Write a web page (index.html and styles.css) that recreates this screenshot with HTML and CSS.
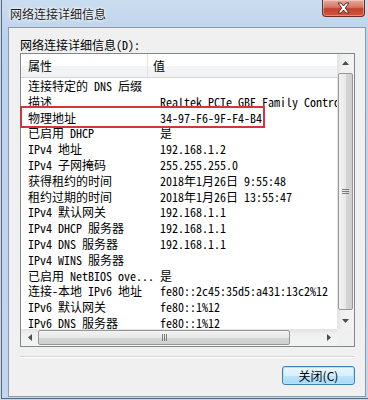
FILE: index.html
```html
<!DOCTYPE html>
<html>
<head>
<meta charset="utf-8">
<link rel="stylesheet" href="styles.css">
</head>
<body>
<div class="win">
  <div class="titlebar">
    <span class="title">网络连接详细信息</span>
    <div class="close">
      <svg width="17" height="12" viewBox="0 0 17 12">
        <path d="M3 1 L6 1 L8.5 4 L11 1 L14 1 L10.3 6 L14 11 L11 11 L8.5 8 L6 11 L3 11 L6.7 6 Z" fill="#fff" stroke="#5a2a22" stroke-width="1" stroke-linejoin="round"/>
      </svg>
    </div>
  </div>
  <div class="client">
    <div class="label">网络连接详细信息(D):</div>
    <div class="lv">
      <div class="lv-main">
        <div class="lv-head">
          <div class="c1">属性</div>
          <div class="hsep"></div>
          <div class="c2">值</div>
        </div>
        <div class="lv-body">
          <div class="row"><span class="c1">连接特定的 DNS 后缀</span><span class="c2"></span></div>
          <div class="row"><span class="c1">描述</span><span class="c2">Realtek PCIe GBE Family Controller</span></div>
          <div class="row"><span class="c1">物理地址</span><span class="c2">34-97-F6-9F-F4-B4</span></div>
          <div class="row"><span class="c1">已启用 DHCP</span><span class="c2">是</span></div>
          <div class="row"><span class="c1">IPv4 地址</span><span class="c2">192.168.1.2</span></div>
          <div class="row"><span class="c1">IPv4 子网掩码</span><span class="c2">255.255.255.0</span></div>
          <div class="row"><span class="c1">获得租约的时间</span><span class="c2">2018年1月26日 9:55:48</span></div>
          <div class="row"><span class="c1">租约过期的时间</span><span class="c2">2018年1月26日 13:55:47</span></div>
          <div class="row"><span class="c1">IPv4 默认网关</span><span class="c2">192.168.1.1</span></div>
          <div class="row"><span class="c1">IPv4 DHCP 服务器</span><span class="c2">192.168.1.1</span></div>
          <div class="row"><span class="c1">IPv4 DNS 服务器</span><span class="c2">192.168.1.1</span></div>
          <div class="row"><span class="c1">IPv4 WINS 服务器</span><span class="c2"></span></div>
          <div class="row"><span class="c1">已启用 NetBIOS ove...</span><span class="c2">是</span></div>
          <div class="row"><span class="c1">连接-本地 IPv6 地址</span><span class="c2">fe80::2c45:35d5:a431:13c2%12</span></div>
          <div class="row"><span class="c1">IPv6 默认网关</span><span class="c2">fe80::1%12</span></div>
          <div class="row"><span class="c1">IPv6 DNS 服务器</span><span class="c2">fe80::1%12</span></div>
        </div>
      </div>
      <div class="vscroll">
        <div class="arrow"><svg width="7" height="4" viewBox="0 0 7 4"><path d="M0 4 L3.5 0 L7 4 Z" fill="#4d4d4d"/></svg></div>
        <div class="vthumb"><div class="grip-h"></div></div>
        <div class="arrow"><svg width="7" height="4" viewBox="0 0 7 4"><path d="M0 0 L3.5 4 L7 0 Z" fill="#4d4d4d"/></svg></div>
      </div>
      <div class="hscroll">
        <div class="arrow"><svg width="4" height="7" viewBox="0 0 4 7"><path d="M4 0 L0 3.5 L4 7 Z" fill="#4d4d4d"/></svg></div>
        <div class="hthumb"><div class="grip-v"></div></div>
        <div class="arrow"><svg width="4" height="7" viewBox="0 0 4 7"><path d="M0 0 L4 3.5 L0 7 Z" fill="#4d4d4d"/></svg></div>
      </div>
      <div class="corner"></div>
    </div>
    <div class="sep"></div>
    <div class="btnrow"><div class="btn">关闭(C)</div></div>
  </div>
</div>
<div class="highlight"></div>
</body>
</html>
```
FILE: styles.css
```css
html, body {
  margin: 0;
  padding: 0;
}
body {
  width: 368px;
  height: 400px;
  overflow: hidden;
  position: relative;
  background: #c3d7ec;
}
.win {
  margin-left: 1px;
  width: 367px;
  height: 399px;
  box-sizing: border-box;
  border-left: 1px solid #5b6b7d;
  border-bottom: 1px solid #5b6b7d;
  background: linear-gradient(#cadcef, #bcd2ea 40px, #c2d6ec);
}
.titlebar {
  height: 27px;
  display: flex;
  align-items: flex-start;
  justify-content: space-between;
}
.title {
  font-family: "Noto Sans CJK SC", sans-serif;
  font-size: 12px;
  line-height: 14px;
  padding: 7px 0 0 8px;
  color: #1e1e1e;
  text-shadow: 0 0 4px #fff, 0 0 3px #fff;
}
.close {
  width: 43px;
  height: 17px;
  margin-right: 3px;
  box-sizing: border-box;
  border: 1px solid #6e2b22;
  border-top: none;
  border-radius: 0 0 4px 4px;
  background: linear-gradient(#e9a89a, #d47766 45%, #c2412c 55%, #d5553c);
  display: flex;
  align-items: center;
  justify-content: center;
  box-shadow: inset 0 0 0 1px rgba(255,255,255,0.35);
}
.client {
  margin-left: 6px;
  width: 358px;
  height: 370px;
  box-sizing: border-box;
  border: 1px solid #8c9aab;
  background: #f0f0f0;
  font-family: "Noto Sans Mono CJK SC", "Noto Sans CJK SC", monospace;
  font-size: 12px;
  color: #000;
}
.label {
  padding: 10px 0 0 11px;
  line-height: 14px;
  height: 14px;
}
.lv {
  margin: 1px 0 0 11px;
  width: 335px;
  height: 294px;
  box-sizing: border-box;
  border: 1px solid #828790;
  background: #fff;
  display: grid;
  grid-template-columns: 316px 17px;
  grid-template-rows: 275px 17px;
}
.lv-main {
  overflow: hidden;
}
.lv-head {
  height: 23px;
  border-bottom: 1px solid #d5d5d5;
  background: linear-gradient(#ffffff, #ffffff 50%, #f3f4f6 52%, #f1f2f4);
  display: flex;
  align-items: center;
  font-family: "Noto Sans CJK SC", sans-serif;
  font-size: 12px;
}
.lv-head .c1 {
  width: 126px;
  padding-left: 7px;
  box-sizing: border-box;
}
.hsep {
  width: 1px;
  height: 23px;
  background: #e3e5e9;
}
.lv-head .c2 {
  padding-left: 5px;
}
.row {
  height: 15.8px;
  line-height: 15.8px;
  display: flex;
  white-space: nowrap;
}
.row .c1 {
  width: 139px;
  padding-left: 7px;
  box-sizing: border-box;
  flex: none;
  overflow: hidden;
}
.row .c2 {
  flex: none;
}
.vscroll {
  background: linear-gradient(90deg, #e3e3e3, #f0f0f0 30%, #f3f3f3);
  display: flex;
  flex-direction: column;
  align-items: center;
}
.vscroll .arrow {
  height: 17px;
  width: 17px;
  display: flex;
  align-items: center;
  justify-content: center;
}
.vthumb {
  flex: 1;
  width: 15px;
  margin: 2px 0;
  box-sizing: border-box;
  border: 1px solid #979797;
  border-radius: 2px;
  background: linear-gradient(90deg, #f3f3f3, #e8e8e8 50%, #d6d6d6 51%, #d0d0d0);
  display: flex;
  align-items: center;
  justify-content: center;
}
.grip-h {
  width: 7px;
  height: 5px;
  background: repeating-linear-gradient(#7a7a7a 0 1px, transparent 1px 2px);
}
.hscroll {
  background: linear-gradient(#e3e3e3, #f0f0f0 30%, #f3f3f3);
  display: flex;
  align-items: center;
}
.hscroll .arrow {
  width: 17px;
  height: 17px;
  flex: none;
  display: flex;
  align-items: center;
  justify-content: center;
}
.hthumb {
  width: 252px;
  height: 15px;
  margin-right: 30px;
  box-sizing: border-box;
  border: 1px solid #979797;
  border-radius: 2px;
  background: linear-gradient(#f3f3f3, #e8e8e8 50%, #d6d6d6 51%, #d0d0d0);
  display: flex;
  align-items: center;
  justify-content: center;
}
.grip-v {
  width: 5px;
  height: 7px;
  background: repeating-linear-gradient(90deg, #7a7a7a 0 1px, transparent 1px 2px);
}
.corner {
  background: #f0f0f0;
}
.sep {
  margin: 9px 0 0 11px;
  width: 334px;
  height: 1px;
  border-top: 1px solid #d5d5d5;
  background: #fff;
}
.btnrow {
  display: flex;
  justify-content: flex-end;
  margin: 8px 10px 0 0;
}
.btn {
  width: 73px;
  height: 19px;
  box-sizing: border-box;
  border: 1px solid #3c7fb1;
  border-radius: 3px;
  background: linear-gradient(#eaf6fd, #d9f0fc 50%, #bee6fd 51%, #a7d9f5);
  box-shadow: inset 0 0 0 1px #b8e2f8;
  font-family: "Noto Sans CJK SC", sans-serif;
  font-size: 12px;
  line-height: 17px;
  text-align: center;
}
.highlight {
  position: absolute;
  left: 20px;
  top: 106px;
  width: 245px;
  height: 22px;
  box-sizing: border-box;
  border: 2px solid #d3353c;
}
```
